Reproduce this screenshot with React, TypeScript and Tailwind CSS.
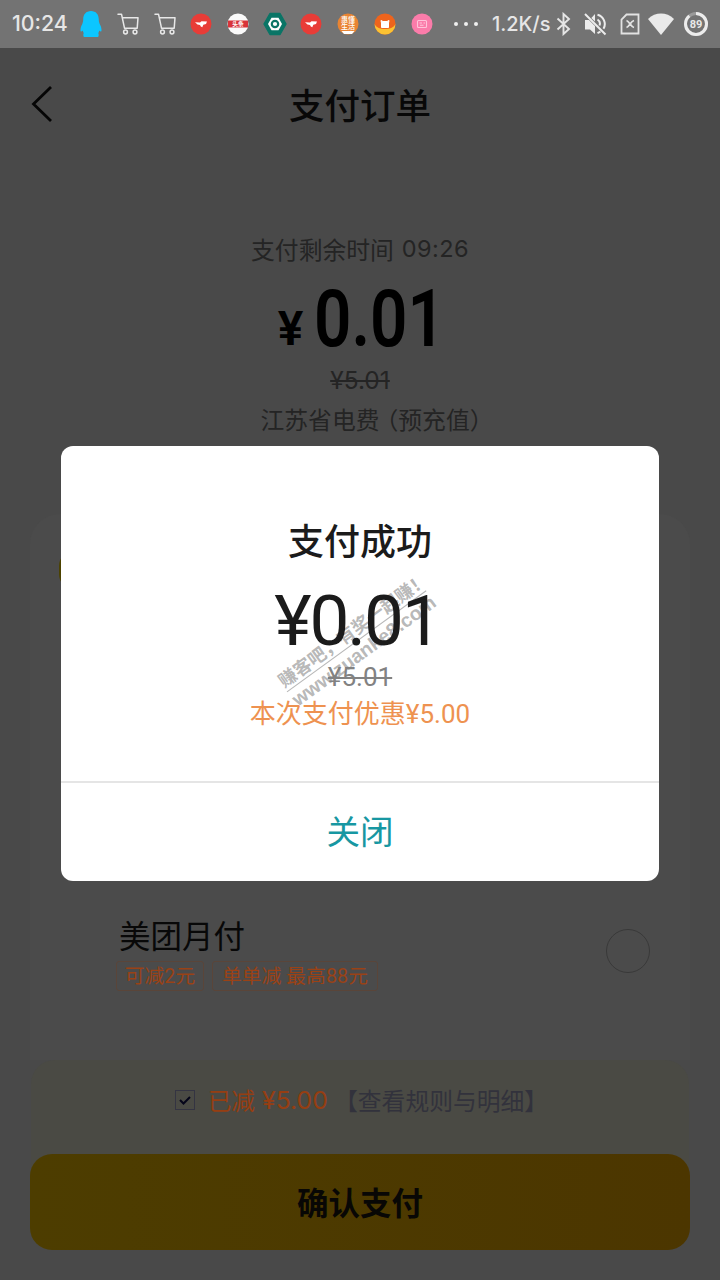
import React from 'react';

const CJK = "font-['Noto_Sans_CJK_SC',sans-serif]";
const LATIN = "font-['Roboto','Noto_Sans_CJK_SC',sans-serif]";
const ROUND = "font-['Inter','Noto_Sans_CJK_SC',sans-serif]";

function Penguin() {
  return (
    <svg width="22" height="28" viewBox="0 0 22 28" fill="#0cc6ff">
      <path d="M11 1C6 1 3.200 4.500 3.200 9.500c0 1.800-.3 3-.9 4.400C1.200 16 .4 18 .5 20.200c0 1.600.9 1.800 2.200.3.300 1 .6 1.900 1 2.500-.4 1-.5 2-.3 3 .1.800.6 1 1.600 1h12c1 0 1.500-.2 1.600-1 .2-1 .1-2-.3-3 .4-.6.7-1.500 1-2.500 1.300 1.500 2.200 1.300 2.200-.3.100-2.200-.7-4.200-1.800-6.300-.6-1.400-.9-2.600-.9-4.400C18.800 4.500 16 1 11 1z" />
    </svg>
  );
}

function Cart() {
  return (
    <svg width="22" height="22" viewBox="0 0 22 22" fill="none" stroke="#e8e8e8" strokeWidth="1.500" strokeLinecap="round" strokeLinejoin="round">
      <path d="M1 1.200h3.500l3 14h12.700L21 4.800H5.200" />
      <circle cx="8.500" cy="19" r="1.900" />
      <circle cx="18" cy="19" r="1.900" />
    </svg>
  );
}

function RedApp() {
  return (
    <svg width="22" height="22" viewBox="0 0 22 22">
      <circle cx="11" cy="11" r="10.500" fill="#e83c37" />
      <path d="M5 9.300l5 .3 1.500-1.300 5.500.3-1 2.300-2.700.9-1 2.500-1.500-.7-.8-1.500-2.500-.7z" fill="#fff" />
    </svg>
  );
}

function StripeApp() {
  return (
    <svg width="22" height="22" viewBox="0 0 22 22">
      <circle cx="11" cy="11" r="10.500" fill="#fafafa" />
      <path d="M1 7.500h20v7H1z" fill="#d8343a" />
      <text x="11" y="13.300" textAnchor="middle" fontSize="5.800" fontWeight="700" fill="#fff" className={CJK}>头条</text>
    </svg>
  );
}

function HexApp() {
  return (
    <svg width="24" height="24" viewBox="0 0 24 24">
      <path d="M7 1.500h10L23 12l-6 10.500H7L1 12z" fill="#0a7566" stroke="#0a7566" strokeWidth="1.500" strokeLinejoin="round" />
      <path d="M8.500 5.800h7L19 12l-3.500 6.200h-7L5 12z" fill="#fff" />
      <circle cx="12" cy="12" r="3.200" fill="none" stroke="#0a7566" strokeWidth="2.200" />
    </svg>
  );
}

function LifeApp() {
  return (
    <svg width="22" height="22" viewBox="0 0 22 22">
      <circle cx="11" cy="11" r="10.500" fill="#e98432" />
      <path d="M4.500 18h13l-2.500 3H7z" fill="#fff" />
      <g fontSize="7" fontWeight="500" fill="#fff" textAnchor="middle" className={CJK}>
        <text x="11" y="9">惠懂</text>
        <text x="11" y="16">生活</text>
      </g>
    </svg>
  );
}

function BearApp() {
  return (
    <svg width="22" height="22" viewBox="0 0 22 22">
      <circle cx="11" cy="11" r="10.500" fill="#ee641d" />
      <path d="M.5 11a10.500 10.500 0 0 0 21 0c-2 4-6 5-10.500 5S2.500 15 .5 11z" fill="#fbc233" />
      <path d="M7 7.500l2 1h4l2-1-.5 2.500v4.500h-7V10z" fill="#fff" stroke="#fff" strokeWidth="1" strokeLinejoin="round" />
    </svg>
  );
}

function PinkApp() {
  return (
    <svg width="22" height="22" viewBox="0 0 22 22" fill="none" stroke="#ffc4da" strokeWidth="1.100">
      <circle cx="11" cy="11" r="10.500" fill="#fb7caa" stroke="none" />
      <rect x="6.500" y="7.500" width="9" height="7" rx="1" />
      <path d="M8.500 10h2.500M12.500 10h1.500M9 12.300h3.500" />
    </svg>
  );
}

function Bluetooth() {
  return (
    <svg width="16" height="24" viewBox="0 0 16 24" fill="none" stroke="#e6e6e6" strokeWidth="1.900">
      <path d="M1.500 6.500L13 17l-5.500 5V2L13 7 1.500 17.500" />
    </svg>
  );
}

function Muted() {
  return (
    <svg width="24" height="24" viewBox="0 0 24 24" fill="none" stroke="#ececec" strokeWidth="2">
      <path d="M2 8h4l6 6v8l-5-4.500H2z" fill="#ececec" stroke="none" />
      <path d="M12 2v7.500L8.300 6z" fill="#ececec" stroke="none" />
      <path d="M14.500 7.500a5 5 0 0 1 2 6M14.500 2.800a9.500 9.500 0 0 1 6 14M14.500 21.200l3-1.500M2 2l20.500 20.500" />
    </svg>
  );
}

function SimOff() {
  return (
    <svg width="20" height="22" viewBox="0 0 20 22" fill="none" stroke="#e2e2e2" strokeWidth="1.800">
      <path d="M6.500 1.500H18.500v19h-17V6.500z" />
      <path d="M6.500 7.500c3 1 4 6 7.500 7M14 7.500c-3.500 1-4.500 6-7.500 7" />
    </svg>
  );
}

function Wifi() {
  return (
    <svg width="28" height="24" viewBox="0 0 28 24">
      <path d="M1 7C8.500-.2 19.500-.2 27 7L14 23z" fill="#eaeaea" />
    </svg>
  );
}

function Battery() {
  return (
    <svg width="26" height="26" viewBox="0 0 26 26">
      <circle cx="13" cy="13" r="10.500" fill="none" stroke="#9a9a9a" strokeWidth="3" />
      <circle cx="13" cy="13" r="10.500" fill="none" stroke="#ececec" strokeWidth="3" pathLength="100" strokeDasharray="89 11" transform="rotate(-90 13 13)" />
      <text x="13" y="17" textAnchor="middle" fontSize="11" fontWeight="700" fill="#e8e8e8" className="font-['Roboto',sans-serif]">89</text>
    </svg>
  );
}

const notifications = [Penguin, Cart, Cart, RedApp, StripeApp, HexApp, RedApp, LifeApp, BearApp, PinkApp];

function StatusBar() {
  return (
    <div className={`flex h-12 items-center bg-[#737373] pl-3 text-[#e6e6e6] ${ROUND}`}>
      <span className="w-[61px] whitespace-nowrap text-[21.300px] font-medium leading-none">10:24</span>
      <div className="flex">
        {notifications.map((Icon, i) => (
          <span key={i} className="flex w-[36.700px] items-center justify-center">
            <Icon />
          </span>
        ))}
      </div>
      <div className="ml-[14px] flex w-[38px] gap-1.5">
        <i className="size-1 rounded-full bg-[#f0f0f0]" />
        <i className="size-1 rounded-full bg-[#f0f0f0]" />
        <i className="size-1 rounded-full bg-[#f0f0f0]" />
      </div>
      <span className="w-[64px] whitespace-nowrap text-[20px] font-medium leading-none">1.2K/s</span>
      <Bluetooth />
      <span className="ml-[11px]"><Muted /></span>
      <span className="ml-[13px]"><SimOff /></span>
      <span className="ml-[7px]"><Wifi /></span>
      <span className="ml-[8px]"><Battery /></span>
    </div>
  );
}

function OrderSummary() {
  return (
    <div className="flex h-[354px] flex-col items-center pt-[73px]">
      <div className="flex h-8 items-center gap-2 text-[#242424]">
        <span className={`text-[23.800px] leading-8 ${CJK}`}>支付剩余时间</span>
        <span className={`text-[23.500px] tracking-[0.400px] ${ROUND}`}>09:26</span>
      </div>
      <div className={`mt-[14px] flex h-[80px] items-end justify-center text-black ${LATIN}`}>
        <span className="mr-[11px] pb-[7px] text-[48px] font-semibold leading-[46px]">¥</span>
        <span className="w-[128px] text-[79px] font-semibold leading-[80px]">
          <span className="block origin-left scale-x-[0.830]">0.01</span>
        </span>
      </div>
      <div className={`mt-[5px] h-8 text-[24.500px] leading-8 text-[#242424] line-through ${ROUND}`}>¥5.01</div>
      <div className={`mt-[7px] flex h-8 whitespace-nowrap pl-[34px] text-[23.800px] leading-8 text-[#242424] ${CJK}`}>
        江苏省电费<span className="-ml-[5px]">（预充值）</span>
      </div>
    </div>
  );
}

function PayMethods() {
  return (
    <div className="mx-[30px] h-[546px] rounded-t-[30px] bg-[#4b4b4b]">
      {/* selected method badge, mostly behind the dialog */}
      <div className="h-[398px] pl-[29px] pt-[36px]">
        <div className="size-[40px] rounded-[16px] bg-[#4c4200]" />
      </div>
      <div className="flex justify-between pl-[86px] pr-10">
        <div>
          <div className={`pl-[3px] text-[31.500px] leading-[44px] text-[#080808] ${CJK}`}>美团月付</div>
          <div className={`mt-[5px] flex h-[30px] gap-2 text-[19.800px] leading-[30px] text-[#9a4216] ${LATIN}`}>
            <span className="w-[88px] rounded-[3px] border border-[#5a4539] text-center">可减2元</span>
            <span className="w-[166px] rounded-[3px] border border-[#5a4539] text-center">单单减 最高88元</span>
          </div>
        </div>
        <div className="mt-[17px] size-11 rounded-full border-[1.500px] border-[#393939]" />
      </div>
    </div>
  );
}

function PayFooter() {
  return (
    <div className="mx-[31px] h-[220px] bg-[#494949]">
      <div className="flex h-[126px] items-start rounded-t-[24px] bg-[#4a4a44] pl-[144px] pt-[26px]">
        <span className="mr-[13px] mt-[4px] flex size-5 items-center justify-center border border-[#343442]">
          <svg width="12" height="9" viewBox="0 0 12 9" fill="none" stroke="#05051a" strokeWidth="2">
            <path d="M1 4l3.500 3.500L11 1" />
          </svg>
        </span>
        <span className={`w-[54px] text-[23.500px] leading-7 text-[#963e12] ${CJK}`}>已减</span>
        <span className={`w-[72px] text-[24.800px] leading-[29px] text-[#963e12] ${ROUND}`}>¥5.00</span>
        <span className={`text-[23.800px] leading-7 text-[#32323c] ${CJK}`}>【查看规则与明细】</span>
      </div>
      <button className={`-mx-px -mt-[32px] flex h-[96px] w-[660px] items-center justify-center rounded-[22px] bg-gradient-to-r from-[#4d3d00] to-[#4c3600] text-[31.500px] font-bold text-[#080705] ${CJK}`}>
        确认支付
      </button>
    </div>
  );
}

function SuccessDialog() {
  return (
    <div className="absolute left-[61px] top-[446px] h-[435px] w-[598px] overflow-hidden rounded-[12px] bg-white text-center">
      {/* diagonal site stamp */}
      <div className="absolute left-[209px] top-[171px] w-[172px] -rotate-[36deg] whitespace-nowrap font-bold text-[#8f8f8f]/65">
        <div className={`border-b border-[#8f8f8f]/65 text-[18px] leading-[24px] ${CJK}`}>赚客吧，有奖一起赚！</div>
        <div className="font-['Liberation_Sans',sans-serif] text-[19.500px] leading-[22px]">www.zuanke8.com</div>
      </div>
      <div className={`relative h-[337px] border-b-2 border-[#e5e5e5] pt-[68px] text-[#1b1b1b] ${LATIN}`}>
        <h2 className={`text-[36px] font-medium leading-[50px] ${CJK}`}>支付成功</h2>
        <div className="mt-[17px] h-[80px] pr-[6px] text-[71px] leading-[80px] tracking-[-2px]">¥0.01</div>
        <div className="h-8 text-[26px] leading-8 text-[#828282] line-through decoration-2">¥5.01</div>
        <div className="mt-[3px] text-[26px] leading-9 text-[#ee9250]">本次支付优惠¥5.00</div>
      </div>
      <button className={`block h-[95px] w-full text-[33.500px] text-[#1797a2] ${CJK}`}>关闭</button>
    </div>
  );
}

export default function App() {
  return (
    <div className="relative h-[1280px] w-[720px] overflow-hidden bg-[#494949]">
      <StatusBar />
      <header className="flex h-[112px] items-center justify-between px-[31px]">
        <svg width="22" height="38" viewBox="0 0 22 38" fill="none" stroke="#050505" strokeWidth="2.800">
          <path d="M20 2L2.500 19 20 36" />
        </svg>
        <h1 className={`text-[35.500px] font-medium text-[#080808] ${CJK}`}>支付订单</h1>
        <span className="w-[22px]" />
      </header>
      <OrderSummary />
      <PayMethods />
      <PayFooter />
      <SuccessDialog />
    </div>
  );
}
